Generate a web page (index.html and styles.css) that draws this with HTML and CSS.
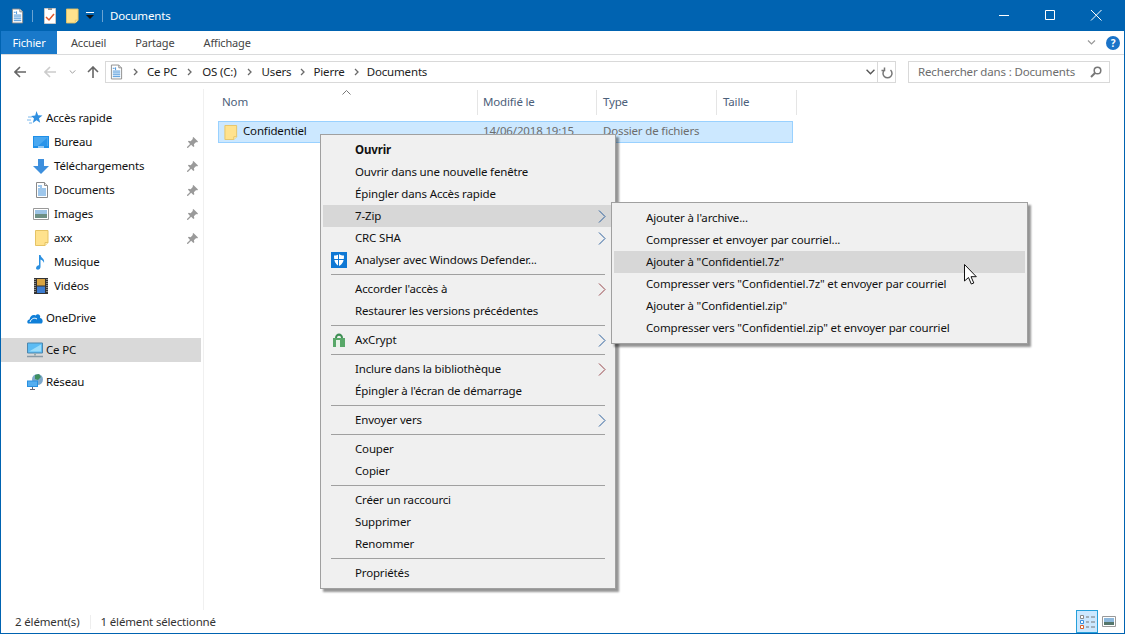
FILE: index.html
```html
<!DOCTYPE html>
<html lang="fr">
<head>
<meta charset="utf-8">
<title>Documents</title>
<link rel="stylesheet" href="styles.css">
</head>
<body>
<svg class="defs" aria-hidden="true">
  <defs>
    <symbol id="doc" viewBox="0 0 14 16">
      <path d="M1.500.500h8l3 3v12h-11z" fill="#fff" stroke="#8a8a8a"/>
      <path d="M9.500.500v3h3" fill="#e8e8e8" stroke="#8a8a8a"/>
      <path d="M3 4h2M6 3v3M3 7h8M3 9h8M3 11h8M3 13h8" stroke="#3f8fd8" fill="none"/>
    </symbol>
    <symbol id="folder" viewBox="0 0 14 16">
      <path d="M.500.500h12.500v12l-3 3H.500z" fill="#ffe28d" stroke="#e5c365"/>
      <path d="M10 15.500v-3h3" fill="#fff2bd" stroke="#e5c365"/>
    </symbol>
    <symbol id="pin" viewBox="0 0 12 12">
      <path d="M7 0l5 5-1 1-1-.500-2.500 2.500.5 2-1 1-2.500-2.500L1 12l-1-.2v-.8l3.300-3.500L1 5l1-1 2 .5L6.500 2 6 1z" fill="#9a9a9a"/>
    </symbol>
    <symbol id="back" viewBox="0 0 12 12">
      <path d="M6 1L1 6l5 5M1 6h11" fill="none" stroke="currentColor" stroke-width="1.600"/>
    </symbol>
    <symbol id="up" viewBox="0 0 12 12">
      <path d="M1 6l5-5 5 5M6 1v11" fill="none" stroke="currentColor" stroke-width="1.600"/>
    </symbol>
    <symbol id="crumb" viewBox="0 0 5 8">
      <path d="M1 1l3 3-3 3" fill="none" stroke="#6a6a6a" stroke-width="1.300"/>
    </symbol>
    <symbol id="chev" viewBox="0 0 8 5">
      <path d="M.500.500L4 4 7.500.500" fill="none" stroke="currentColor" stroke-width="1.200"/>
    </symbol>
    <symbol id="arrow" viewBox="0 0 8 13">
      <path d="M1 .500l6 6-6 6" fill="none" stroke="currentColor"/>
    </symbol>
  </defs>
</svg>

<div class="window">
  <header class="titlebar">
    <svg class="ic-doc-t"><use href="#doc"/></svg>
    <span class="tsep"></span>
    <svg class="ic-check" viewBox="0 0 12 16">
      <path d="M.500.500h11v15H.500z" fill="#fff" stroke="#c9c9c9"/>
      <path d="M2 9l3 3 5-6" fill="none" stroke="#e0562a" stroke-width="1.500"/>
      <path d="M4 0h4v2H4z" fill="#999"/>
    </svg>
    <svg class="ic-folder-t"><use href="#folder"/></svg>
    <svg class="ic-qat" viewBox="0 0 8 8">
      <path d="M0 0h8v1H0z" fill="#fff"/>
      <path d="M0 3h8L4 7z" fill="#111"/>
    </svg>
    <span class="tsep tsep-b"></span>
    <span class="wintitle">Documents</span>
    <div class="controls">
      <svg class="ctl" viewBox="0 0 46 31"><path d="M18 15.500h10" stroke="#fff"/></svg>
      <svg class="ctl" viewBox="0 0 46 31"><path d="M18.500 10.500h9v9h-9z" fill="none" stroke="#fff"/></svg>
      <svg class="ctl" viewBox="0 0 46 31"><path d="M18 10l10.500 10.500M28.500 10L18 20.500" stroke="#fff"/></svg>
    </div>
  </header>

  <nav class="tabs">
    <span class="tab tab-file">Fichier</span>
    <span class="tab tab-a">Accueil</span>
    <span class="tab tab-b">Partage</span>
    <span class="tab tab-c">Affichage</span>
    <svg class="ribbon-chev"><use href="#chev"/></svg>
    <span class="help">?</span>
  </nav>

  <div class="addressrow">
    <svg class="nav nav-back"><use href="#back"/></svg>
    <svg class="nav nav-fwd"><use href="#back"/></svg>
    <svg class="nav-down"><use href="#chev"/></svg>
    <svg class="nav nav-up"><use href="#up"/></svg>
    <div class="address">
      <svg class="ic-doc-a"><use href="#doc"/></svg>
      <svg class="crumb"><use href="#crumb"/></svg><span class="crumbtext">Ce PC</span>
      <svg class="crumb"><use href="#crumb"/></svg><span class="crumbtext">OS (C:)</span>
      <svg class="crumb"><use href="#crumb"/></svg><span class="crumbtext">Users</span>
      <svg class="crumb crumb-t"><use href="#crumb"/></svg><span class="crumbtext">Pierre</span>
      <svg class="crumb crumb-t"><use href="#crumb"/></svg><span class="crumbtext">Documents</span>
      <svg class="addr-chev"><use href="#chev"/></svg>
      <span class="refresh">
        <svg class="ic-refresh" viewBox="0 0 12 12"><path d="M3 2.500a4.500 4.500 0 1 0 6 0M3 0v3H0" transform="translate(.5 1)" fill="none" stroke="#777" stroke-width="1.500"/></svg>
      </span>
    </div>
    <div class="search">
      <span class="searchtext">Rechercher dans : Documents</span>
      <svg class="ic-search" viewBox="0 0 12 12"><circle cx="7.500" cy="4.500" r="3.300" fill="none" stroke="#777" stroke-width="1.500"/><path d="M5 7l-4 4" stroke="#777" stroke-width="2"/></svg>
    </div>
  </div>

  <div class="main">
    <aside class="sidebar">
      <div class="side top">
        <svg class="ic16" viewBox="0 0 16 16"><path d="M9.500 1l1.600 4.300 4.400.2-3.500 2.800 1.200 4.400-3.700-2.500L5.800 13l1.200-4.500-3-2.600 4.200-.4z" fill="#2f8fe0"/><path d="M1 7h4M0 10h4M2 13h3" stroke="#7ab8ec"/></svg>
        <span>Accès rapide</span>
      </div>
      <div class="side sub">
        <svg class="ic16" viewBox="0 0 16 14"><path d="M0 1h16v12H0z" fill="#1e8fe8"/><path d="M1 2h14v9H1z" fill="#4aa8f0"/><path d="M5 11l9-8v8z" fill="#2b95ea"/><path d="M5 12h6" stroke="#fff"/></svg>
        <span>Bureau</span><svg class="pin"><use href="#pin"/></svg>
      </div>
      <div class="side sub">
        <svg class="ic16" viewBox="0 0 16 16"><path d="M5 1h6v7h5l-8 8-8-8h5z" fill="#3d8fdd"/></svg>
        <span>Téléchargements</span><svg class="pin"><use href="#pin"/></svg>
      </div>
      <div class="side sub">
        <svg class="ic16" viewBox="-1 0 16 16"><use href="#doc"/></svg>
        <span>Documents</span><svg class="pin"><use href="#pin"/></svg>
      </div>
      <div class="side sub">
        <svg class="ic16" viewBox="0 0 16 12"><path d="M.500.500h15v11H.500z" fill="#fff" stroke="#999"/><path d="M2 2h12v4H2z" fill="#9cc3e4"/><path d="M2 6h12v4H2z" fill="#6d8f83"/></svg>
        <span>Images</span><svg class="pin"><use href="#pin"/></svg>
      </div>
      <div class="side sub">
        <svg class="ic16" viewBox="-1 0 16 16"><use href="#folder"/></svg>
        <span>axx</span><svg class="pin"><use href="#pin"/></svg>
      </div>
      <div class="side sub">
        <svg class="ic16" viewBox="0 0 16 16"><path d="M6 1h1.500c.5 3 4.500 3.500 3.500 8-.5-2-2-3-3.500-3.500V13c0 2-2 3-3.500 2.500S3 13 4 12s2-.8 2-.8z" fill="#2a8fe0"/></svg>
        <span>Musique</span>
      </div>
      <div class="side sub">
        <svg class="ic16" viewBox="0 0 16 16"><path d="M1 0h14v16H1z" fill="#333"/><path d="M4 1h8v6.500H4z" fill="#d9a441"/><path d="M4 8.500h8V15H4z" fill="#3b7bd0"/><path d="M2 1v14M14 1v14" stroke="#ddd" stroke-dasharray="1 1"/></svg>
        <span>Vidéos</span>
      </div>

      <div class="side top group">
        <svg class="ic16" viewBox="0 0 16 12"><path d="M1 11.500C-.5 10 .5 7.500 2.500 7.500 3 4 6 2 8.500 3.500 11 1 14 3 13 6c2 0 3 2 2.500 4-.2 1-1 1.500-1.500 1.500z" fill="#0f7fd8"/><path d="M3 10c1-3 4-5 7-3" stroke="#fff" fill="none"/></svg>
        <span>OneDrive</span>
      </div>
      <div class="side top group selected">
        <svg class="ic16" viewBox="0 0 16 15"><path d="M.500.500h15v10H.500z" fill="#5cbcf4" stroke="#4d87ad"/><path d="M2 9l12-7v7z" fill="#9adcfa"/><path d="M0 14h16" stroke="#8a9aa5" stroke-width="1.500"/><path d="M7 11h2v2H7z" fill="#9aa"/></svg>
        <span>Ce PC</span>
      </div>
      <div class="side top group">
        <svg class="ic16" viewBox="0 0 16 16"><circle cx="10.500" cy="5.500" r="5.500" fill="#7fa9cc"/><path d="M8 1l4-1 2 3-3 3-3-1z" fill="#3f8f5f"/><path d="M0 6.500h11V13H0z" fill="#2a90e0"/><path d="M1 7.500h9V12H1z" fill="#56aef0"/><path d="M3 15.500h5M5.500 13v2" stroke="#667"/></svg>
        <span>Réseau</span>
      </div>
    </aside>

    <section class="list">
      <div class="cols">
        <span class="col col-n">Nom</span>
        <span class="col">Modifié le</span>
        <span class="col col-t">Type</span>
        <span class="col col-z">Taille</span>
        <svg class="sort" viewBox="0 0 9 5"><path d="M.500 4.500l4-4 4 4" fill="none" stroke="#777"/></svg>
      </div>
      <div class="row">
        <span class="cell-name"><svg class="ic-folder-r"><use href="#folder"/></svg><span class="nm">Confidentiel</span></span>
        <span class="cell cell-d">14/06/2018 19:15</span>
        <span class="cell cell-t">Dossier de fichiers</span>
      </div>
    </section>
  </div>

  <footer class="status">
    <span class="count">2 élément(s)</span>
    <span class="stsep"></span>
    <span>1 élément sélectionné</span>
    <span class="viewbtn on">
      <svg class="vic" viewBox="0 0 16 16">
        <path d="M1.500 1.500h3v3h-3z" fill="#fff" stroke="#888"/>
        <path d="M1.500 6.500h3v3h-3z" fill="#fff" stroke="#3a8fdc"/>
        <path d="M1.500 11.500h3v3h-3z" fill="#fff" stroke="#d8602a"/>
        <path d="M7 3h3M12 3h4M7 8h3M12 8h4M7 13h3M12 13h4" stroke="#777"/>
      </svg>
    </span>
    <svg class="vthumb" viewBox="0 0 14 11"><path d="M.500.500h13v10H.500z" fill="#fff" stroke="#999"/><path d="M2 2h10v4H2z" fill="#8db8dc"/><path d="M2 6h10v3H2z" fill="#55766b"/></svg>
  </footer>
</div>

<div class="menu menu-main">
  <div class="item strong">Ouvrir</div>
  <div class="item">Ouvrir dans une nouvelle fenêtre</div>
  <div class="item">Épingler dans Accès rapide</div>
  <div class="item hl">7-Zip<svg class="arr arr-blue"><use href="#arrow"/></svg></div>
  <div class="item">CRC SHA<svg class="arr arr-blue"><use href="#arrow"/></svg></div>
  <div class="item">
    <svg class="mi" viewBox="0 0 16 16"><path d="M0 0h16v16H0z" fill="#0f78d4"/><path d="M8 2c1.500 1 3 1.500 5 1.500 0 5-1 8.500-5 10.500-4-2-5-5.500-5-10.500C5 3.500 6.500 3 8 2z" fill="#fff"/><path d="M7.500 2v12M3 7.500h10" stroke="#0f78d4"/></svg>
    Analyser avec Windows Defender...
  </div>
  <div class="sep"></div>
  <div class="item">Accorder l'accès à<svg class="arr arr-red"><use href="#arrow"/></svg></div>
  <div class="item">Restaurer les versions précédentes</div>
  <div class="sep"></div>
  <div class="item">
    <svg class="mi" viewBox="0 0 16 16"><path d="M2 6h12v9H2z" fill="#59a869"/><path d="M4 6c0-6 8-6 8 0h-2c0-3-4-3-4 0z" fill="#3f8f55"/><path d="M5 8h4v7H5z" fill="#e8f3e8"/></svg>
    AxCrypt<svg class="arr arr-blue"><use href="#arrow"/></svg>
  </div>
  <div class="sep"></div>
  <div class="item">Inclure dans la bibliothèque<svg class="arr arr-red"><use href="#arrow"/></svg></div>
  <div class="item">Épingler à l'écran de démarrage</div>
  <div class="sep"></div>
  <div class="item">Envoyer vers<svg class="arr arr-blue"><use href="#arrow"/></svg></div>
  <div class="sep"></div>
  <div class="item">Couper</div>
  <div class="item">Copier</div>
  <div class="sep"></div>
  <div class="item">Créer un raccourci</div>
  <div class="item">Supprimer</div>
  <div class="item">Renommer</div>
  <div class="sep"></div>
  <div class="item">Propriétés</div>
</div>

<div class="menu menu-sub">
  <div class="item">Ajouter à l'archive...</div>
  <div class="item">Compresser et envoyer par courriel...</div>
  <div class="item hl">Ajouter à "Confidentiel.7z"</div>
  <div class="item">Compresser vers "Confidentiel.7z" et envoyer par courriel</div>
  <div class="item">Ajouter à "Confidentiel.zip"</div>
  <div class="item">Compresser vers "Confidentiel.zip" et envoyer par courriel</div>
</div>

<svg class="cursor" viewBox="0 0 13 21"><path d="M.500.500v16.500l4-3.500 2.800 6.500 2.500-1-2.800-6.300h5.300z" fill="#fff" stroke="#111"/></svg>
</body>
</html>
```

FILE: styles.css
```css
* { box-sizing: border-box; }
html, body { margin: 0; padding: 0; height: 100%; overflow: hidden; }
body {
  font-family: "Noto Sans", "Open Sans", sans-serif;
  font-size: 11.5px;
  letter-spacing: -.16px;
  color: #1a1a1a;
  background: #fff;
}
svg { display: block; flex: none; }
.defs { width: 0; height: 0; position: absolute; }

.window {
  height: 634px;
  display: flex;
  flex-direction: column;
  border: 1px solid #0063b1;
  border-top: 0;
}

/* Title bar */
.titlebar {
  height: 31px;
  flex: none;
  display: flex;
  align-items: center;
  background: #0063b1;
  color: #fff;
  padding-left: 10px;
}
.ic-doc-t { width: 13px; height: 16px; }
.tsep { width: 1px; height: 12px; background: #6aa3d2; margin: 0 11px 0 8px; }
.tsep-b { margin: 0 7px 0 8px; }
.ic-check { width: 12px; height: 16px; }
.ic-folder-t { width: 13px; height: 16px; margin-left: 10px; }
.ic-qat { width: 8px; height: 8px; margin-left: 7px; margin-top: 1px; }
.controls { margin-left: auto; display: flex; margin-right: 5px; }
.ctl { width: 46px; height: 31px; }

/* Tabs */
.tabs {
  height: 24px;
  flex: none;
  display: flex;
  align-items: center;
  border-bottom: 1px solid #dadbdc;
  color: #444;
  font-size: 11px;
}
.tab { height: 23px; line-height: 24px; }
.tab-file {
  width: 56px;
  text-align: center;
  background: #1979ca;
  color: #fff;
}
.tab-a { margin-left: 14px; }
.tab-b { margin-left: 29px; }
.tab-c { margin-left: 29px; }
.ribbon-chev { width: 9px; height: 5px; color: #999; margin-left: auto; margin-right: 10px; }
.help {
  width: 14px;
  height: 14px;
  border-radius: 50%;
  background: #1a73c8;
  color: #fff;
  font-weight: 700;
  font-size: 10px;
  line-height: 14px;
  text-align: center;
  margin-right: 4px;
}

/* Address row */
.addressrow {
  height: 34px;
  flex: none;
  display: flex;
  align-items: flex-start;
  padding-top: 6px;
  padding-left: 13px;
}
.nav { width: 12px; height: 12px; margin-top: 5px; color: #666; }
.nav-fwd { color: #ccc; margin-left: 18px; }
.nav-down { width: 7px; height: 4px; margin-top: 9px; margin-left: 13px; color: #999; }
.nav-up { margin-left: 11px; }
.address {
  width: 791px;
  height: 22px;
  margin-left: 6px;
  border: 1px solid #d9d9d9;
  display: flex;
  align-items: center;
  padding-left: 4px;
}
.ic-doc-a { width: 13px; height: 16px; }
.crumb { width: 5px; height: 8px; margin: 0 10px; }
.crumb-t { margin: 0 8px 0 9px; }
.ic-doc-a + .crumb { margin: 0 9px 0 10px; }
.crumbtext { color: #222; margin-bottom: 2px; }
.addr-chev { width: 9px; height: 6px; color: #555; margin-left: auto; margin-right: 2px; }
.refresh {
  width: 18px;
  height: 20px;
  border-left: 1px solid #d9d9d9;
  display: flex;
  align-items: center;
  justify-content: center;
}
.ic-refresh { width: 12px; height: 13px; }
.search {
  width: 202px;
  height: 22px;
  margin-left: 12px;
  border: 1px solid #d9d9d9;
  display: flex;
  align-items: center;
  padding: 0 7px 0 8px;
  color: #6d6d6d;
  justify-content: space-between;
}
.searchtext { margin-bottom: 2px; margin-left: 1px; }
.ic-search { width: 12px; height: 12px; }

/* Main */
.main { flex: 1; display: flex; min-height: 0; }
.sidebar {
  width: 203px;
  flex: none;
  padding: 17px 2px 0 0;
  border-right: 1px solid #f0f0f0;
}
.side {
  height: 24px;
  display: flex;
  align-items: center;
  color: #111;
}
.side span { margin-bottom: 2px; }
.side.top { padding-left: 26px; }
.side.sub { padding-left: 32px; }
.side.top .ic16 { margin-right: 3px; }
.side.sub .ic16 { margin-right: 5px; }
.group { margin-top: 8px; }
.selected { background: #d9d9d9; }
.ic16 { width: 16px; height: 16px; }
.pin { width: 11px; height: 11px; margin-left: auto; margin-right: 3px; }

/* File list */
.list { flex: 1; padding: 1px 0 0 14px; }
.cols { display: grid; grid-template-columns: 260px 119px 120px 80px; width: 579px; height: 25px; position: relative; color: #4c607a; }
.col { border-right: 1px solid #e5e5e5; padding-left: 5px; line-height: 24px; }
.col-n { padding-left: 4px; }
.col-t, .col-z { padding-left: 6px; }
.sort { position: absolute; left: 124px; top: 0; width: 9px; height: 5px; }
.row {
  margin-top: 6px;
  width: 575px;
  height: 22px;
  display: grid;
  grid-template-columns: 259px 119px 1fr;
  align-items: center;
  background: #cce8ff;
  border: 1px solid #99d1ff;
  color: #6d6d6d;
}
.cell-name { display: flex; align-items: center; color: #111; padding-left: 5px; }
.nm, .cell { margin-bottom: 3px; }
.ic-folder-r { width: 14px; height: 15px; margin-right: 5px; }
.cell-d { padding-left: 5px; }
.cell-t { padding-left: 6px; }

/* Status bar */
.status {
  height: 23px;
  flex: none;
  display: flex;
  align-items: center;
  padding-left: 14px;
  color: #333;
}
.stsep { width: 1px; height: 14px; background: #eee; margin: 0 10px; }
.viewbtn {
  width: 22px;
  height: 23px;
  margin-left: auto;
  margin-right: 4px;
  background: #cce8ff;
  border: 1px solid #26a0da;
  display: flex;
  align-items: center;
  justify-content: center;
}
.vic { width: 16px; height: 16px; }
.vthumb { width: 14px; height: 11px; margin-right: 8px; }

/* Context menus */
.menu {
  position: absolute;
  background: #f0f0f0;
  border: 1px solid #a0a0a0;
  padding: 4px 2px;
  box-shadow: 3px 3px 2px rgba(0, 0, 0, .42);
  color: #111;
}
.menu-main { left: 320px; top: 134px; width: 296px; height: 455px; }
.menu-sub { left: 611px; top: 202px; width: 417px; height: 142px; }
.item {
  height: 22px;
  display: flex;
  align-items: center;
  padding-left: 32px;
  padding-bottom: 2px;
  position: relative;
}
.hl { background: #d7d7d7; }
.strong { font-weight: 700; }
.sep { height: 7px; margin: 0 8px; padding-top: 3px; }
.sep::before { content: ""; display: block; height: 1px; background: #a0a0a0; }
.arr { width: 8px; height: 13px; margin-left: auto; margin-right: 7px; margin-top: 2px; }
.arr-blue { color: #2a5f9c; }
.arr-red { color: #96444a; }
.mi { width: 16px; height: 16px; position: absolute; left: 8px; top: 3px; }
.cursor { position: absolute; left: 964px; top: 264px; width: 13px; height: 21px; }
```
